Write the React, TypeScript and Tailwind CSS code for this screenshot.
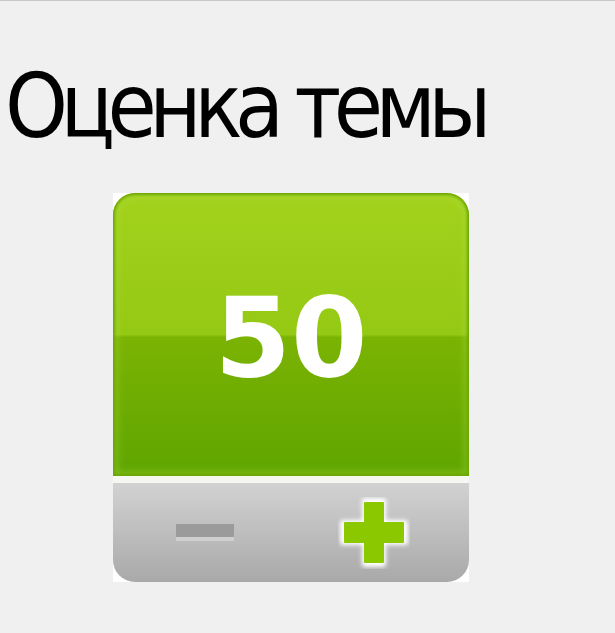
export default function App() {
  return (
    <div className="min-h-[633px] w-[615px] border-t border-[#c8c8c8] bg-[#f0f0f0] font-['DejaVu_Sans',sans-serif]">
      <h1 className="whitespace-nowrap pl-[5px] pt-[61px] font-['DejaVu_Sans_Condensed','DejaVu_Sans',sans-serif] text-[89px] leading-none font-normal tracking-[-7.5px] text-black">
        Оценка темы
      </h1>
      <div className="ml-[113px] mt-[42px] flex w-[356px] flex-col">
        <div className="h-[283px] bg-white">
          <div className="flex h-full items-center justify-center rounded-t-[22px] bg-[linear-gradient(to_bottom,#a3d21c_0%,#94c914_50%,#7bb303_51%,#5fa500_100%)] shadow-[inset_0_0_3px_2px_#6aa600,inset_0_0_8px_4px_rgba(190,235,90,0.35)]">
            <span className="mt-[6px] text-[110px] leading-none font-bold text-white">50</span>
          </div>
        </div>
        <div className="h-[7px] bg-[#f6f7f0]" />
        <div className="h-[99px] bg-white">
          <div className="flex h-full items-center rounded-b-[22px] bg-[linear-gradient(to_bottom,#d2d2d2,#a9a9a9)]">
            <div className="ml-[63px] flex flex-col">
              <div className="h-[13px] w-[58px] bg-[#9b9b9b]" />
              <div className="h-[4px] w-[58px] bg-[#cfcfcf]" />
            </div>
            <svg width="72" height="72" viewBox="0 0 72 72" className="ml-[104px]">
              <defs>
                <filter id="glow" x="-20%" y="-20%" width="140%" height="140%">
                  <feGaussianBlur stdDeviation="2" />
                </filter>
              </defs>
              <path d="M27 4h18v22h22v19H45v22H27V45H5V26h22z" fill="#ffffff" stroke="#ffffff" strokeWidth="6" strokeLinejoin="round" filter="url(#glow)" />
              <path d="M27 6h18v20h20v19H45v20H27V45H7V26h20z" fill="#8cc800" stroke="#8cc800" strokeWidth="2" strokeLinejoin="round" />
            </svg>
          </div>
        </div>
      </div>
    </div>
  );
}
